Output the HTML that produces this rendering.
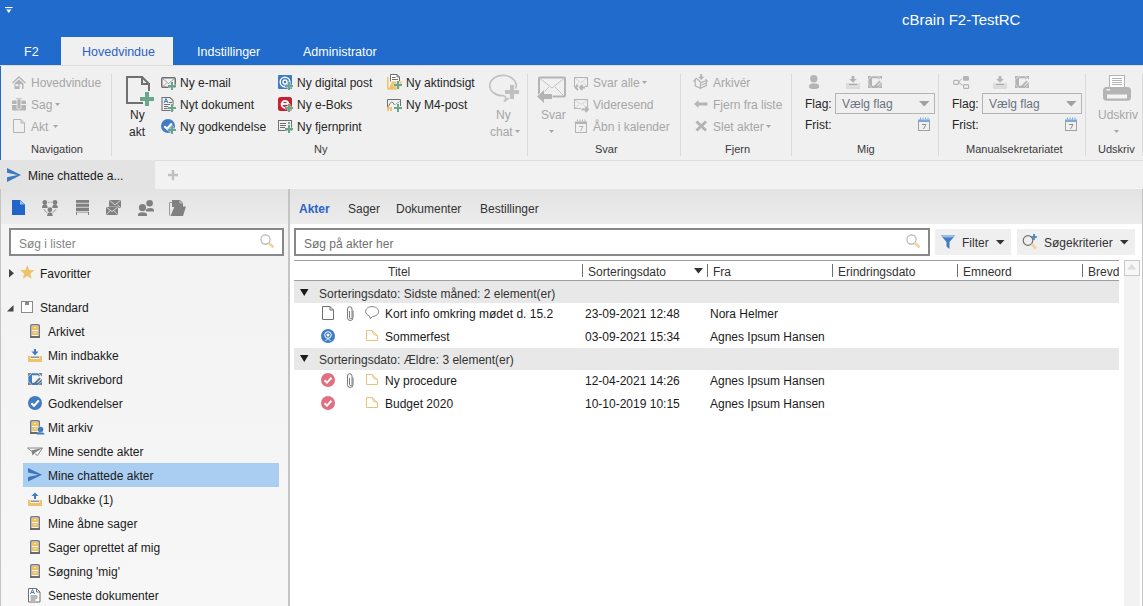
<!DOCTYPE html>
<html><head><meta charset="utf-8">
<style>
*{margin:0;padding:0;box-sizing:border-box}
html,body{width:1143px;height:606px;overflow:hidden;background:#f0f0f0;font-family:"Liberation Sans",sans-serif;font-size:12px;color:#262626}
.a{position:absolute}
.t{position:absolute;white-space:nowrap;line-height:14px}
svg{position:absolute;overflow:visible}
.tab{color:#fff;font-size:12.5px}
.gray{color:#a6a6a6}
.sep{position:absolute;width:1px;background:#dadada}
.lbl{color:#3a3a3a}
</style></head><body>


<!-- ============ TITLE BAR ============ -->
<div class="a" style="left:0;top:0;width:1143px;height:65px;background:#206bcb"></div>
<svg style="left:5px;top:7px" width="10" height="8"><rect x="0" y="0" width="7.6" height="1.1" fill="#fff"/><path d="M1.2 2.6 H6.4 L3.8 5.9 Z" fill="#fff"/></svg>
<div class="t" style="left:902px;top:11px;color:#fff;font-size:15px;line-height:18px">cBrain F2-TestRC</div>
<div class="a" style="left:61px;top:37px;width:112px;height:29px;background:#f0f0f0"></div>
<div class="t tab" style="left:24px;top:45px">F2</div>
<div class="t tab" style="left:82px;top:45px;color:#2c62c4">Hovedvindue</div>
<div class="t tab" style="left:197px;top:45px">Indstillinger</div>
<div class="t tab" style="left:303px;top:45px">Administrator</div>

<!-- ============ RIBBON ============ -->
<div class="a" style="left:0;top:65px;width:1143px;height:1px;background:#dcdcdc"></div>
<div class="a" style="left:0;top:66px;width:1px;height:95px;background:#206bcb"></div>


<!-- Navigation -->
<svg style="left:12px;top:76px" width="14" height="13"><path d="M0.6 7 L7 0.9 L13.4 7" fill="none" stroke="#b4b4b4" stroke-width="1.4"/><path d="M2.5 7.5 L7 3.4 L11.5 7.5 V13 H2.5 Z" fill="#b4b4b4" stroke="#f0f0f0" stroke-width="0.8" paint-order="stroke"/><rect x="3.5" y="8.2" width="3" height="2" fill="#f0f0f0"/><rect x="7.6" y="8.2" width="2.4" height="4.8" fill="#f0f0f0"/></svg>
<svg style="left:12px;top:98px" width="14" height="13"><rect x="0" y="2.5" width="14" height="10" rx="1" fill="#b4b4b4"/><rect x="0" y="6" width="14" height="1" fill="#f0f0f0"/><rect x="4.5" y="0" width="5" height="1.2" fill="#b4b4b4"/><rect x="5" y="1" width="4" height="10" rx="1" fill="#b4b4b4" stroke="#f0f0f0" stroke-width="0.8"/></svg>
<svg style="left:13px;top:119px" width="12" height="14"><path d="M0.5 0.5 H8 L11.5 4 V13.5 H0.5 Z" fill="none" stroke="#b4b4b4"/><path d="M8 0.5 V4 H11.5" fill="none" stroke="#b4b4b4"/></svg>
<div class="t gray" style="left:31px;top:76px">Hovedvindue</div>
<div class="t gray" style="left:31px;top:98px">Sag</div>
<svg style="left:55px;top:103px" width="6" height="4"><path d="M0 0H5L2.5 3Z" fill="#a6a6a6"/></svg>
<div class="t gray" style="left:31px;top:120px">Akt</div>
<svg style="left:53px;top:125px" width="6" height="4"><path d="M0 0H5L2.5 3Z" fill="#a6a6a6"/></svg>
<div class="t lbl" style="left:31px;top:142px;font-size:11px">Navigation</div>
<div class="sep" style="left:111px;top:74px;height:82px"></div>

<!-- Ny -->
<svg style="left:125px;top:75px" width="30" height="32"><path d="M1 2 H17 L24 9 V16" fill="none" stroke="#707070" stroke-width="2"/><path d="M2 1 V28 H18" fill="none" stroke="#707070" stroke-width="2"/><path d="M17 1 V9 H25" fill="none" stroke="#707070" stroke-width="2"/><path d="M20 17h4v5h5v4h-5v5h-4v-5h-5v-4h5z" fill="#6aa68c" stroke="#f0f0f0" stroke-width="1" paint-order="stroke"/></svg>
<div class="t" style="left:130px;top:108px">Ny</div>
<div class="t" style="left:129px;top:125px">akt</div>

<svg style="left:161px;top:77px" width="16" height="14"><rect x="0.75" y="0.75" width="13.5" height="9.5" rx="1" fill="none" stroke="#707070" stroke-width="1.5"/><path d="M1.5 1.5 L7.5 6.5 L13.5 1.5 M1.5 10 L5.5 6 M13.5 10 L9.5 6" fill="none" stroke="#8a8a8a" stroke-width="0.8"/><g transform="translate(7,5)"><path d="M3 0h2v3h3v2h-3v3h-2v-3h-3v-2h3z" fill="#6aa68c" stroke="#f0f0f0" stroke-width="0.8" paint-order="stroke"/></g></svg>
<svg style="left:161px;top:97px" width="16" height="16"><path d="M1 0.5 H9 L12 3.5 V13.5 H1 Z" fill="none" stroke="#707070" stroke-width="1.1"/><path d="M3 6 L5 1.5 L7 6 M3.8 4.5 H6.2" fill="none" stroke="#3f7cc4" stroke-width="1"/><path d="M8 5.5h3M3 7.5h6M3 9.5h4M3 11.5h4" stroke="#707070" stroke-width="1"/><g transform="translate(7,7)"><path d="M3 0h2v3h3v2h-3v3h-2v-3h-3v-2h3z" fill="#6aa68c" stroke="#f0f0f0" stroke-width="0.8" paint-order="stroke"/></g></svg>
<svg style="left:161px;top:119px" width="16" height="16"><g><circle cx="7" cy="7" r="7" fill="#3f7cc4"/><path d="M3.3 7.2 L6 9.8 L10.8 4.6" fill="none" stroke="#fff" stroke-width="2.2"/></g><g transform="translate(7,7)"><path d="M3 0h2v3h3v2h-3v3h-2v-3h-3v-2h3z" fill="#6aa68c" stroke="#f0f0f0" stroke-width="0.8" paint-order="stroke"/></g></svg>
<div class="t" style="left:180px;top:76px">Ny e-mail</div>
<div class="t" style="left:180px;top:98px">Nyt dokument</div>
<div class="t" style="left:180px;top:120px">Ny godkendelse</div>

<svg style="left:278px;top:75px" width="16" height="16"><rect x="0" y="0" width="14" height="14" rx="1" fill="#3f7cc4"/><circle cx="7" cy="7" r="4.8" fill="none" stroke="#fff" stroke-width="1.4"/><circle cx="7" cy="7" r="2" fill="none" stroke="#fff" stroke-width="1.4"/><g transform="translate(7,7)"><path d="M3 0h2v3h3v2h-3v3h-2v-3h-3v-2h3z" fill="#6aa68c" stroke="#f0f0f0" stroke-width="0.8" paint-order="stroke"/></g></svg>
<svg style="left:278px;top:97px" width="16" height="16"><rect x="0" y="0" width="14" height="14" rx="2.5" fill="#c8202f"/><path d="M3.5 7 H10.5 A3.5 3.5 0 1 0 9.8 9.5" fill="none" stroke="#fff" stroke-width="1.8"/><g transform="translate(7,7)"><path d="M3 0h2v3h3v2h-3v3h-2v-3h-3v-2h3z" fill="#6aa68c" stroke="#f0f0f0" stroke-width="0.8" paint-order="stroke"/></g></svg>
<svg style="left:278px;top:120px" width="16" height="14"><rect x="0.5" y="0.5" width="13" height="10" fill="none" stroke="#707070" stroke-width="1"/><path d="M2 3.5h6M2 5.5h6M2 7.5h5" stroke="#707070" stroke-width="1"/><rect x="10" y="2" width="2" height="2" fill="#6aa68c"/><g transform="translate(7,5)"><path d="M3 0h2v3h3v2h-3v3h-2v-3h-3v-2h3z" fill="#6aa68c" stroke="#f0f0f0" stroke-width="0.8" paint-order="stroke"/></g></svg>
<div class="t" style="left:297px;top:76px">Ny digital post</div>
<div class="t" style="left:297px;top:98px">Ny e-Boks</div>
<div class="t" style="left:297px;top:120px">Ny fjernprint</div>

<svg style="left:387px;top:74px" width="16" height="16"><path d="M0.75 3 V14.75 H9" stroke="#eec36a" stroke-width="1.5" fill="none"/><path d="M3.5 7.5 V0.5 H10 L12.5 3 V7.5" fill="#fff" stroke="#707070"/><path d="M10 0.5 V3 H12.5" fill="none" stroke="#707070"/><path d="M5 3.5 H8.5 M5 5.5 H11" stroke="#707070"/><path d="M1.5 15.5 L5 7.5 H15 L12 15.5 Z" fill="#eec36a"/><g transform="translate(7,7)"><path d="M3 0h2v3h3v2h-3v3h-2v-3h-3v-2h3z" fill="#6aa68c" stroke="#f0f0f0" stroke-width="0.8" paint-order="stroke"/></g></svg>
<svg style="left:387px;top:99px" width="16" height="14"><path d="M0.5 8 V0.5 H13.5 V7" fill="none" stroke="#707070"/><path d="M1.5 7.5 Q4.5 -0.5 7.5 6" fill="none" stroke="#707070" stroke-width="0.9"/><path d="M8.5 5.5 L12.5 2.5" stroke="#909090" stroke-width="0.9"/><rect x="0" y="8" width="5" height="4" fill="#eec36a"/><rect x="2" y="9.5" width="1.2" height="2.5" fill="#f0f0f0"/><g transform="translate(7,5)"><path d="M3 0h2v3h3v2h-3v3h-2v-3h-3v-2h3z" fill="#6aa68c" stroke="#f0f0f0" stroke-width="0.8" paint-order="stroke"/></g></svg>
<div class="t" style="left:406px;top:76px">Ny aktindsigt</div>
<div class="t" style="left:406px;top:98px">Ny M4-post</div>

<svg style="left:488px;top:75px" width="32" height="27"><path d="M27.6 13.6 A13.2 10.2 0 1 0 15.6 20.8 Q19.2 21.8 16.8 26" fill="none" stroke="#c0c0c0" stroke-width="1.6"/><path d="M15.8 26.4 L20.8 23" fill="none" stroke="#c0c0c0" stroke-width="1.8"/><path d="M22 10h4v5h5v4h-5v5h-4v-5h-5v-4h5z" fill="#c0c0c0" stroke="#f0f0f0" stroke-width="1" paint-order="stroke"/></svg>
<div class="t gray" style="left:496px;top:108px">Ny</div>
<div class="t gray" style="left:490px;top:125px">chat</div>
<svg style="left:515px;top:130px" width="6" height="4"><path d="M0 0H5L2.5 3Z" fill="#a6a6a6"/></svg>
<div class="t lbl" style="left:314px;top:142px;font-size:11px">Ny</div>
<div class="sep" style="left:527px;top:74px;height:82px"></div>

<!-- Svar -->
<svg style="left:537px;top:76px" width="32" height="28"><rect x="2" y="1.5" width="26" height="19" rx="1" fill="none" stroke="#b4b4b4" stroke-width="2"/><path d="M3 2.5 L15 12 L27 2.5 M3 20 L12 11 M27 20 L18 11" fill="none" stroke="#c4c4c4" stroke-width="1"/><path d="M0 20.5 L7 14 V18 H15 V23 H7 V27 Z" fill="#b4b4b4" stroke="#f0f0f0" stroke-width="1.2" paint-order="stroke"/></svg>
<div class="t gray" style="left:541px;top:108px">Svar</div>
<svg style="left:549px;top:130px" width="6" height="4"><path d="M0 0H5L2.5 3Z" fill="#a6a6a6"/></svg>
<svg style="left:574px;top:77px" width="16" height="14"><rect x="0.5" y="0.5" width="13" height="9" fill="none" stroke="#b4b4b4"/><path d="M1 1 L7 5.5 L13 1 M1 9 L5 5.5 M13 9 L9 5.5" fill="none" stroke="#c8c8c8" stroke-width="0.7"/><path d="M1 10.5 H11" stroke="#f0f0f0" stroke-width="4"/><path d="M4 8 L1.5 10.5 L4 13 M8.5 8 L6 10.5 L8.5 13 M6 10.5 H11" fill="none" stroke="#b4b4b4" stroke-width="1.8"/></svg>
<svg style="left:574px;top:99px" width="16" height="14"><rect x="0.5" y="0.5" width="13" height="9" fill="none" stroke="#b4b4b4"/><path d="M1 1 L7 5.5 L13 1 M1 9 L5 5.5 M13 9 L9 5.5" fill="none" stroke="#c8c8c8" stroke-width="0.7"/><path d="M7 10.5 H15" stroke="#f0f0f0" stroke-width="4"/><path d="M11.5 8 L14 10.5 L11.5 13 M7.5 10.5 H13.5" fill="none" stroke="#b4b4b4" stroke-width="1.8"/></svg>
<svg style="left:575px;top:119px" width="12" height="14"><g><rect x="0.5" y="3.5" width="11" height="10" fill="none" stroke="#b4b4b4"/><rect x="0" y="2.5" width="12" height="2.5" fill="#b4b4b4"/><path d="M2.5 0.5v2M5 0.5v2M7.5 0.5v2M10 0.5v2" stroke="#b4b4b4" stroke-width="1"/><path d="M4 7.5 H8 L5.5 12" fill="none" stroke="#b4b4b4" stroke-width="1"/></g></svg>
<div class="t gray" style="left:593px;top:76px">Svar alle</div>
<svg style="left:642px;top:81px" width="6" height="4"><path d="M0 0H5L2.5 3Z" fill="#a6a6a6"/></svg>
<div class="t gray" style="left:593px;top:98px">Videresend</div>
<div class="t gray" style="left:593px;top:120px">Åbn i kalender</div>
<div class="t lbl" style="left:595px;top:142px;font-size:11px">Svar</div>
<div class="sep" style="left:680px;top:74px;height:82px"></div>

<!-- Fjern -->
<svg style="left:693px;top:74px" width="16" height="16"><rect x="7.2" y="0" width="2" height="3.5" fill="#b4b4b4"/><path d="M5 2.8 H11.4 L8.2 6 Z" fill="#b4b4b4"/><path d="M0.3 7.6 L3.2 4.3 L7.5 7.8 M2.2 6 V11.8 L7.5 14.3 V7.8 M7.5 14.3 L13.3 11.5 V7.2 M7.5 8.6 L13.8 6.5 M12.6 5 L14.6 7.6 M8.6 11 L13 9.2" fill="none" stroke="#b4b4b4" stroke-width="1.2"/></svg>
<svg style="left:694px;top:100px" width="14" height="9"><path d="M0 4 L4.5 0 V2.5 H13.5 V5.5 H4.5 V8 Z" fill="#b4b4b4"/></svg>
<svg style="left:695px;top:120px" width="13" height="12"><path d="M1.5 1.5 L11 10.5 M11 1.5 L1.5 10.5" stroke="#b4b4b4" stroke-width="3"/></svg>
<div class="t gray" style="left:713px;top:76px">Arkivér</div>
<div class="t gray" style="left:713px;top:98px">Fjern fra liste</div>
<div class="t gray" style="left:713px;top:120px">Slet akter</div>
<svg style="left:766px;top:125px" width="6" height="4"><path d="M0 0H5L2.5 3Z" fill="#a6a6a6"/></svg>
<div class="t lbl" style="left:725px;top:142px;font-size:11px">Fjern</div>
<div class="sep" style="left:791px;top:74px;height:82px"></div>

<!-- Mig -->
<svg style="left:809px;top:75px" width="11" height="14"><circle cx="4.8" cy="3.8" r="3.7" fill="#b4b4b4"/><path d="M0 12 C0 9 2 8.6 5 8.6 C8 8.6 10.2 9 10.2 12 C10.2 13.6 8 14 5 14 C2 14 0 13.6 0 12 Z" fill="#b4b4b4"/></svg>
<svg style="left:846px;top:76px" width="14" height="13"><g><rect x="5.6" y="0" width="2.8" height="4" fill="#b4b4b4"/><path d="M3.3 3 H10.7 L7 6.8 Z" fill="#b4b4b4"/><rect x="0" y="7" width="14" height="6" fill="#dcdcdc"/><rect x="3" y="8" width="8" height="1" fill="#a8a8a8"/></g></svg>
<svg style="left:868px;top:76px" width="14" height="13"><g><path d="M0 0h3.5L0 3.5zM14 0h-3.5L14 3.5zM0 12h3.5L0 8.5zM14 12h-3.5L14 8.5z" fill="#b4b4b4"/><path d="M4 0.3 H10 L12 2.3 L10.5 3.8 V2.3 H4 V9.7 H10 L13.8 6 V8.3 L10 12 H4 L0.3 8.3 V3.8 Z" fill="#b4b4b4"/><path d="M6.5 9.5 L11.5 4.5 L12.8 5.8 L7.8 10.8 L6 11 Z" fill="#b4b4b4"/></g></svg>
<div class="t" style="left:805px;top:97px">Flag:</div>
<div class="a" style="left:835px;top:93px;width:100px;height:21px;border:1px solid #b4b4b4"></div>
<div class="t" style="left:842px;top:97px;color:#6a7280">Vælg flag</div>
<svg style="left:919px;top:101px" width="11" height="6"><path d="M0 0H10.5L5.25 5.5Z" fill="#a0a0a0"/></svg>
<div class="t" style="left:805px;top:118px">Frist:</div>
<svg style="left:918px;top:117px" width="12" height="14"><g><rect x="0.5" y="3.5" width="11" height="10" fill="none" stroke="#a0a0a0"/><rect x="0" y="2.5" width="12" height="2.5" fill="#7fa7d8"/><path d="M2.5 0.5v2M5 0.5v2M7.5 0.5v2M10 0.5v2" stroke="#7fa7d8" stroke-width="1"/><path d="M4 7.5 H8 L5.5 12" fill="none" stroke="#909090" stroke-width="1"/></g></svg>
<div class="t lbl" style="left:857px;top:142px;font-size:11px">Mig</div>
<div class="sep" style="left:938px;top:74px;height:82px"></div>

<!-- Manualsekretariatet -->
<svg style="left:953px;top:76px" width="17" height="13"><rect x="0.6" y="4.4" width="5" height="3.9" rx="1" fill="none" stroke="#b4b4b4" stroke-width="1.2"/><rect x="10" y="0" width="6" height="4.7" rx="1.2" fill="#b4b4b4"/><rect x="10.6" y="8.6" width="5" height="3.8" rx="1" fill="none" stroke="#b4b4b4" stroke-width="1.2"/><path d="M5.6 6.3 L8.6 2.6 M5.6 6.3 L10.4 9.8" fill="none" stroke="#b4b4b4" stroke-width="1"/></svg>
<svg style="left:993px;top:76px" width="14" height="13"><g><rect x="5.6" y="0" width="2.8" height="4" fill="#b4b4b4"/><path d="M3.3 3 H10.7 L7 6.8 Z" fill="#b4b4b4"/><rect x="0" y="7" width="14" height="6" fill="#dcdcdc"/><rect x="3" y="8" width="8" height="1" fill="#a8a8a8"/></g></svg>
<svg style="left:1015px;top:76px" width="14" height="13"><g><path d="M0 0h3.5L0 3.5zM14 0h-3.5L14 3.5zM0 12h3.5L0 8.5zM14 12h-3.5L14 8.5z" fill="#b4b4b4"/><path d="M4 0.3 H10 L12 2.3 L10.5 3.8 V2.3 H4 V9.7 H10 L13.8 6 V8.3 L10 12 H4 L0.3 8.3 V3.8 Z" fill="#b4b4b4"/><path d="M6.5 9.5 L11.5 4.5 L12.8 5.8 L7.8 10.8 L6 11 Z" fill="#b4b4b4"/></g></svg>
<div class="t" style="left:952px;top:97px">Flag:</div>
<div class="a" style="left:982px;top:93px;width:100px;height:21px;border:1px solid #b4b4b4"></div>
<div class="t" style="left:989px;top:97px;color:#6a7280">Vælg flag</div>
<svg style="left:1066px;top:101px" width="11" height="6"><path d="M0 0H10.5L5.25 5.5Z" fill="#a0a0a0"/></svg>
<div class="t" style="left:952px;top:118px">Frist:</div>
<svg style="left:1065px;top:117px" width="12" height="14"><g><rect x="0.5" y="3.5" width="11" height="10" fill="none" stroke="#a0a0a0"/><rect x="0" y="2.5" width="12" height="2.5" fill="#7fa7d8"/><path d="M2.5 0.5v2M5 0.5v2M7.5 0.5v2M10 0.5v2" stroke="#7fa7d8" stroke-width="1"/><path d="M4 7.5 H8 L5.5 12" fill="none" stroke="#909090" stroke-width="1"/></g></svg>
<div class="t lbl" style="left:966px;top:142px;font-size:11px">Manualsekretariatet</div>
<div class="sep" style="left:1085px;top:74px;height:82px"></div>

<!-- Udskriv -->
<svg style="left:1103px;top:75px" width="28" height="26"><rect x="6.5" y="0.5" width="15" height="12" fill="#fff" stroke="#b4b4b4"/><path d="M9 3.5h10M9 5.5h10M9 7.5h10M9 9.5h10" stroke="#b4b4b4" stroke-width="1"/><rect x="0" y="12" width="28" height="13.7" rx="3.5" fill="#b4b4b4"/><rect x="4" y="19.5" width="20" height="4" fill="#f4f4f4"/><rect x="3.5" y="14" width="3.5" height="1.5" fill="#f4f4f4"/></svg>
<div class="t gray" style="left:1098px;top:108px">Udskriv</div>
<svg style="left:1114px;top:130px" width="6" height="4"><path d="M0 0H5L2.5 3Z" fill="#a6a6a6"/></svg>
<div class="t lbl" style="left:1098px;top:142px;font-size:11px">Udskriv</div>
<div class="sep" style="left:1142px;top:74px;height:82px"></div>

<!-- ============ DOC TAB STRIP ============ -->
<div class="a" style="left:0;top:160px;width:1143px;height:1px;background:#dedede"></div>
<div class="a" style="left:0;top:161px;width:1143px;height:28px;background:#f2f2f2"></div>
<div class="a" style="left:0;top:160px;width:155px;height:29px;background:#e3e3e3"></div>
<svg style="left:7px;top:168px" width="15" height="14"><path d="M0 0 L14 7 L0 14 L0 9.2 L10.5 7 L0 4.8 Z" fill="#3d78c0"/></svg>
<div class="t" style="left:28px;top:169px;color:#1a1a1a">Mine chattede a...</div>
<svg style="left:168px;top:170px" width="10" height="10"><path d="M3.8 0h2.4v3.8h3.8v2.4h-3.8v3.8h-2.4v-3.8h-3.8v-2.4h3.8z" fill="#c0c0c0"/></svg>

<!-- ============ LEFT PANEL ============ -->
<div class="a" style="left:0;top:189px;width:289px;height:417px;background:linear-gradient(#f3f3f3 0px,#f3f3f3 120px,#f7f7f7 417px);border-left:1px solid #c4c4c4"></div>
<div class="a" style="left:1px;top:189px;width:287px;height:35px;background:linear-gradient(#e3e3e3,#ececec)"></div>
<svg style="left:12px;top:200px" width="13" height="15"><path d="M0 0 H8 L13 4.5 V15 H0 Z" fill="#1f66c8"/><path d="M8 0.5 V4.5 H12.5 Z" fill="#9fc0ea"/></svg>
<svg style="left:42px;top:200px" width="17" height="16"><circle cx="2.8" cy="2.5" r="2.4" fill="#808080"/><path d="M0 8 Q0 4.6 2.8 4.6 Q5.6 4.6 5.6 8 Z" fill="#808080"/><circle cx="13" cy="2.5" r="2.4" fill="#808080"/><path d="M10.2 8 Q10.2 4.6 13 4.6 Q15.8 4.6 15.8 8 Z" fill="#808080"/><circle cx="7.9" cy="9.7" r="2.4" fill="#808080"/><path d="M5.1 16 Q5.1 12.2 7.9 12.2 Q10.7 12.2 10.7 16 Z" fill="#808080"/><path d="M6 2.3 H10" stroke="#909090" stroke-width="0.8" stroke-dasharray="1 0.6"/><path d="M1.8 9.2 L5 12.8 M14 9.2 L10.8 12.8" stroke="#808080" stroke-width="0.9"/></svg>
<svg style="left:76px;top:200px" width="13" height="15"><rect x="0" y="0" width="13" height="12.5" fill="#808080"/><path d="M0 3.3h13M0 7.3h13M0 11.6h13" stroke="#e2e2e2" stroke-width="0.9"/><rect x="0" y="12" width="1" height="3" fill="#808080"/><rect x="12" y="12" width="1" height="3" fill="#808080"/></svg>
<svg style="left:106px;top:200px" width="16" height="15"><rect x="3" y="0" width="12" height="8" fill="#808080"/><path d="M3.3 0.3 L9 4.8 L14.7 0.3 M14.7 7.7 L11.5 5" fill="none" stroke="#e8e8e8" stroke-width="0.8"/><rect x="0" y="7" width="12" height="8" rx="0.6" fill="#808080" stroke="#e8e8e8" stroke-width="0.7" paint-order="stroke"/><path d="M0.4 7.4 L6 11.6 L11.6 7.4 M0.4 14.6 L4.3 10.5 M11.6 14.6 L7.7 10.5" fill="none" stroke="#e8e8e8" stroke-width="0.8"/></svg>
<svg style="left:138px;top:200px" width="17" height="17"><circle cx="11.6" cy="3.3" r="3.3" fill="#808080"/><path d="M8 11.5 V10 C8 7.3 16 7.3 16 10 V11.5 Z" fill="#808080"/><circle cx="4.5" cy="7.7" r="3.6" fill="#808080" stroke="#e8e8e8" stroke-width="0.8" paint-order="stroke"/><path d="M0 16 V14.5 C0 11.5 9 11.5 9 14.5 V16 Z" fill="#808080" stroke="#e8e8e8" stroke-width="0.8" paint-order="stroke"/></svg>
<svg style="left:169px;top:200px" width="17" height="16"><path d="M0.5 15.5 V2.5 H3" fill="none" stroke="#9a9a9a" stroke-width="1"/><path d="M3 0 H11 L14 3 V7 H3 Z" fill="#808080"/><path d="M11 0.5 V3 H13.5" fill="none" stroke="#e8e8e8" stroke-width="0.7"/><path d="M5.5 6.5 H17 L14 16 H1.5 Z" fill="#808080"/></svg>

<div class="a" style="left:9px;top:228px;width:275px;height:28px;border:2px solid #888;background:#fff"></div>
<div class="t" style="left:19px;top:237px;color:#858585">Søg i lister</div>
<svg style="left:260px;top:234px" width="16" height="15"><circle cx="5.5" cy="5.5" r="4.6" fill="none" stroke="#b0b0b0" stroke-width="1.1"/><path d="M9 9 L13.5 13.5" stroke="#efd39a" stroke-width="2.5"/></svg>

<svg style="left:9px;top:269px" width="6" height="9"><path d="M0 0 L5 4.3 L0 8.6 Z" fill="#444"/></svg>
<svg style="left:20px;top:265px" width="15" height="15"><path d="M7.3 0 L9.2 4.9 L14.5 5.2 L10.4 8.6 L11.7 13.8 L7.3 11 L2.8 13.8 L4.2 8.6 L0 5.2 L5.3 4.9 Z" fill="#eec36a"/></svg>
<div class="t" style="left:40px;top:267px;color:#1a1a1a">Favoritter</div>

<svg style="left:7px;top:305px" width="7" height="7"><path d="M6.5 0 V6.5 H0 Z" fill="#444"/></svg>
<svg style="left:21px;top:301px" width="12" height="12"><rect x="0.5" y="0.5" width="11" height="11" fill="#fff" stroke="#8a8a8a"/><rect x="4" y="1" width="4" height="3" fill="#8a8a8a"/></svg>
<div class="t" style="left:40px;top:301px;color:#1a1a1a">Standard</div>

<div class="a" style="left:23px;top:463px;width:256px;height:24px;background:#a9cef1"></div>
<svg style="left:30px;top:324px" width="10" height="14"><g><rect x="0.75" y="0.75" width="8.5" height="12.5" rx="1" fill="#f4f4f4" stroke="#7a7a7a" stroke-width="1.5"/><rect x="2" y="2" width="6" height="4" fill="#eec36a"/><rect x="2" y="7" width="6" height="4" fill="#eec36a"/><rect x="0" y="12" width="10" height="2" fill="#6a6a6a"/><rect x="4" y="3" width="2" height="1" fill="#f8e0b0"/><rect x="4" y="8" width="2" height="1" fill="#f8e0b0"/></g></svg>
<svg style="left:28px;top:349px" width="14" height="13"><path d="M3.5 2.6 H10.5 L7 6.4 Z" fill="#3f7cc4"/><rect x="6" y="0" width="2" height="3" fill="#3f7cc4"/><path d="M0 7 H2.5 V10 H11.5 V7 H14 V13 H0 Z" fill="#eec36a"/><rect x="3" y="7.6" width="8" height="1.1" fill="#707070"/></svg>
<svg style="left:28px;top:373px" width="14" height="12"><g><path d="M0 0h3.5L0 3.5zM14 0h-3.5L14 3.5zM0 12h3.5L0 8.5zM14 12h-3.5L14 8.5z" fill="#808080"/><path d="M4 0.3 H10 L12 2.3 L10.5 3.8 V2.3 H4 V9.7 H10 L13.8 6 V8.3 L10 12 H4 L0.3 8.3 V3.8 Z" fill="#3f7cc4"/><path d="M6.5 9.5 L11.5 4.5 L12.8 5.8 L7.8 10.8 L6 11 Z" fill="#707070"/></g></svg>
<svg style="left:28px;top:396px" width="14" height="14"><g><circle cx="7" cy="7" r="7" fill="#3f7cc4"/><path d="M3.3 7.2 L6 9.8 L10.8 4.6" fill="none" stroke="#fff" stroke-width="2.2"/></g></svg>
<svg style="left:30px;top:420px" width="15" height="15"><g><rect x="0.75" y="0.75" width="8.5" height="12.5" rx="1" fill="#f4f4f4" stroke="#7a7a7a" stroke-width="1.5"/><rect x="2" y="2" width="6" height="4" fill="#eec36a"/><rect x="2" y="7" width="6" height="4" fill="#eec36a"/><rect x="0" y="12" width="10" height="2" fill="#6a6a6a"/><rect x="4" y="3" width="2" height="1" fill="#f8e0b0"/><rect x="4" y="8" width="2" height="1" fill="#f8e0b0"/></g><circle cx="10.6" cy="9.4" r="2.7" fill="#3f7cc4" stroke="#f3f3f3" stroke-width="0.8" paint-order="stroke"/><path d="M6.6 14.6 C6.6 11.6 14.6 11.6 14.6 14.6 Z" fill="#3f7cc4" stroke="#f3f3f3" stroke-width="0.6" paint-order="stroke"/></svg>
<svg style="left:27px;top:447px" width="16" height="10"><path d="M0.5 1 H15.5 L10.5 8.5 L8 6.8 M0.5 1 L4.5 4.2" fill="none" stroke="#8a8a8a" stroke-width="1"/><path d="M4.2 3.6 L15.5 1 L8.2 5.6 L5.6 8.6 Z" fill="#808080"/></svg>
<svg style="left:28px;top:468px" width="15" height="14"><path d="M0 0 L14 6.8 L0 13.6 L0 9 L10.5 6.8 L0 4.6 Z" fill="#3d75b8"/></svg>
<svg style="left:28px;top:492px" width="14" height="14"><path d="M3.5 4 L7 0.5 L10.5 4 Z" fill="#3f7cc4"/><rect x="6" y="3.5" width="2" height="3.5" fill="#3f7cc4"/><path d="M0 8 H2.5 V11 H11.5 V8 H14 V14 H0 Z" fill="#eec36a"/><rect x="3" y="8.6" width="8" height="1.1" fill="#707070"/></svg>
<svg style="left:30px;top:516px" width="10" height="14"><g><rect x="0.75" y="0.75" width="8.5" height="12.5" rx="1" fill="#f4f4f4" stroke="#7a7a7a" stroke-width="1.5"/><rect x="2" y="2" width="6" height="4" fill="#eec36a"/><rect x="2" y="7" width="6" height="4" fill="#eec36a"/><rect x="0" y="12" width="10" height="2" fill="#6a6a6a"/><rect x="4" y="3" width="2" height="1" fill="#f8e0b0"/><rect x="4" y="8" width="2" height="1" fill="#f8e0b0"/></g></svg>
<svg style="left:30px;top:540px" width="10" height="14"><g><rect x="0.75" y="0.75" width="8.5" height="12.5" rx="1" fill="#f4f4f4" stroke="#7a7a7a" stroke-width="1.5"/><rect x="2" y="2" width="6" height="4" fill="#eec36a"/><rect x="2" y="7" width="6" height="4" fill="#eec36a"/><rect x="0" y="12" width="10" height="2" fill="#6a6a6a"/><rect x="4" y="3" width="2" height="1" fill="#f8e0b0"/><rect x="4" y="8" width="2" height="1" fill="#f8e0b0"/></g></svg>
<svg style="left:30px;top:564px" width="10" height="14"><g><rect x="0.75" y="0.75" width="8.5" height="12.5" rx="1" fill="#f4f4f4" stroke="#7a7a7a" stroke-width="1.5"/><rect x="2" y="2" width="6" height="4" fill="#eec36a"/><rect x="2" y="7" width="6" height="4" fill="#eec36a"/><rect x="0" y="12" width="10" height="2" fill="#6a6a6a"/><rect x="4" y="3" width="2" height="1" fill="#f8e0b0"/><rect x="4" y="8" width="2" height="1" fill="#f8e0b0"/></g></svg>
<svg style="left:28px;top:588px" width="13" height="15"><path d="M0.5 0.5 H8.5 L12 4 V14 H0.5 Z" fill="#fff" stroke="#707070"/><path d="M8.5 0.5 V4 H12" fill="none" stroke="#707070"/><path d="M2.5 6 L4.5 1.5 L6.5 6 M3.2 4.5 H5.8" fill="none" stroke="#3f7cc4" stroke-width="1"/><path d="M2.5 8h7M2.5 10h7M2.5 12h5" stroke="#707070"/></svg>

<div class="t" style="left:48px;top:325px;color:#1a1a1a">Arkivet</div>
<div class="t" style="left:48px;top:349px;color:#1a1a1a">Min indbakke</div>
<div class="t" style="left:48px;top:373px;color:#1a1a1a">Mit skrivebord</div>
<div class="t" style="left:48px;top:397px;color:#1a1a1a">Godkendelser</div>
<div class="t" style="left:48px;top:421px;color:#1a1a1a">Mit arkiv</div>
<div class="t" style="left:48px;top:445px;color:#1a1a1a">Mine sendte akter</div>
<div class="t" style="left:48px;top:469px;color:#1a1a1a">Mine chattede akter</div>
<div class="t" style="left:48px;top:493px;color:#1a1a1a">Udbakke (1)</div>
<div class="t" style="left:48px;top:517px;color:#1a1a1a">Mine åbne sager</div>
<div class="t" style="left:48px;top:541px;color:#1a1a1a">Sager oprettet af mig</div>
<div class="t" style="left:48px;top:565px;color:#1a1a1a">Søgning 'mig'</div>
<div class="t" style="left:48px;top:589px;color:#1a1a1a">Seneste dokumenter</div>

<!-- ============ RIGHT PANEL ============ -->
<div class="a" style="left:288px;top:189px;width:2px;height:417px;background:#c4c4c4"></div>
<div class="a" style="left:290px;top:189px;width:853px;height:417px;background:#fff"></div>
<div class="a" style="left:290px;top:189px;width:853px;height:35px;background:linear-gradient(#e3e3e3,#ececec)"></div>
<div class="t" style="left:299px;top:202px;color:#2a64c6;font-weight:bold">Akter</div>
<div class="t" style="left:348px;top:202px;color:#333">Sager</div>
<div class="t" style="left:396px;top:202px;color:#333">Dokumenter</div>
<div class="t" style="left:480px;top:202px;color:#333">Bestillinger</div>

<div class="a" style="left:294px;top:228px;width:636px;height:28px;border:2px solid #888;background:#fff"></div>
<div class="t" style="left:304px;top:237px;color:#6f6f6f">Søg på akter her</div>
<svg style="left:906px;top:234px" width="16" height="15"><circle cx="5.5" cy="5.5" r="4.6" fill="none" stroke="#b0b0b0" stroke-width="1.1"/><path d="M9 9 L13.5 13.5" stroke="#efd39a" stroke-width="2.5"/></svg>

<div class="a" style="left:935px;top:229px;width:76px;height:26px;background:#efefef"></div>
<svg style="left:941px;top:235px" width="14" height="14"><path d="M0 0.5 H14 L8.5 7 V14 L5.5 11.5 V7 Z" fill="#3f7cc4"/><ellipse cx="7" cy="1.5" rx="6" ry="1" fill="#9dc0ea"/></svg>
<div class="t" style="left:962px;top:236px;color:#333">Filter</div>
<svg style="left:996px;top:240px" width="9" height="5"><path d="M0 0H8.5L4.25 4.5Z" fill="#333"/></svg>
<div class="a" style="left:1017px;top:229px;width:118px;height:26px;background:#efefef"></div>
<svg style="left:1022px;top:234px" width="17" height="16"><circle cx="6" cy="6.5" r="4.8" fill="none" stroke="#707070" stroke-width="1.2"/><path d="M9.5 10 L14 14.5" stroke="#efd39a" stroke-width="2.5"/><path d="M12 0v6M9 3h6" stroke="#3f7cc4" stroke-width="1.6"/></svg>
<div class="t" style="left:1044px;top:236px;color:#333">Søgekriterier</div>
<svg style="left:1120px;top:240px" width="9" height="5"><path d="M0 0H8.5L4.25 4.5Z" fill="#333"/></svg>

<!-- table -->
<div class="a" style="left:294px;top:260px;width:825px;height:1px;background:#a0a0a0"></div>
<div class="a" style="left:294px;top:280px;width:825px;height:1px;background:#a0a0a0"></div>
<div class="a" style="left:582px;top:264px;width:1px;height:13px;background:#707070"></div>
<div class="a" style="left:707px;top:264px;width:1px;height:13px;background:#707070"></div>
<div class="a" style="left:832px;top:264px;width:1px;height:13px;background:#707070"></div>
<div class="a" style="left:957px;top:264px;width:1px;height:13px;background:#707070"></div>
<div class="a" style="left:1082px;top:264px;width:1px;height:13px;background:#707070"></div>
<div class="t" style="left:388px;top:265px;color:#333">Titel</div>
<div class="t" style="left:588px;top:265px;color:#333">Sorteringsdato</div>
<svg style="left:694px;top:268px" width="10" height="6"><path d="M0 0H9L4.5 5.5Z" fill="#333"/></svg>
<div class="t" style="left:713px;top:265px;color:#333">Fra</div>
<div class="t" style="left:838px;top:265px;color:#333">Erindringsdato</div>
<div class="t" style="left:963px;top:265px;color:#333">Emneord</div>
<div class="a" style="left:1088px;top:260px;width:31px;height:20px;overflow:hidden"><div class="t" style="left:0;top:5px;color:#333">Brevdato</div></div>

<div class="a" style="left:294px;top:281px;width:825px;height:22px;background:#e8e8e8"></div>
<svg style="left:300px;top:289px" width="9" height="8"><path d="M0 0H8.5L4.25 7Z" fill="#1a1a1a"/></svg>
<div class="t" style="left:319px;top:287px;color:#333">Sorteringsdato: Sidste måned: 2 element(er)</div>

<svg style="left:322px;top:306px" width="12" height="14"><g><path d="M0.5 0.5 H8 L11.5 4 V13.5 H0.5 Z" fill="#fff" stroke="#707070"/><path d="M8 0.5 V4 H11.5" fill="none" stroke="#707070"/></g></svg>
<svg style="left:347px;top:306px" width="8" height="15"><g><path d="M6 4.5 V11.8 A2.75 2.75 0 0 1 0.5 11.8 V3 A2.25 2.25 0 0 1 5 3 V11.5 A1.25 1.25 0 0 1 2.5 11.5 V5" fill="none" stroke="#6a6a6a" stroke-width="0.9"/></g></svg>
<svg style="left:365px;top:306px" width="15" height="14"><path d="M7 0.6 C3.5 0.6 0.6 2.8 0.6 5.5 C0.6 7.5 2.3 9.2 4.5 10 L5.5 12.8 L7.5 10.4 C11 10.4 13.6 8.2 13.6 5.5 C13.6 2.8 10.6 0.6 7 0.6 Z" fill="none" stroke="#808080" stroke-width="1"/></svg>
<div class="t" style="left:385px;top:307px;color:#1a1a1a">Kort info omkring mødet d. 15.2</div>
<div class="t" style="left:585px;top:307px;color:#1a1a1a">23-09-2021 12:48</div>
<div class="t" style="left:710px;top:307px;color:#1a1a1a">Nora Helmer</div>

<svg style="left:321px;top:329px" width="14" height="14"><circle cx="7" cy="7" r="7" fill="#3f7cc4"/><circle cx="7" cy="6" r="3.3" fill="none" stroke="#fff" stroke-width="1"/><circle cx="7" cy="6" r="1.5" fill="#fff"/><path d="M4.5 12 L7 9.5 L9.5 12" fill="none" stroke="#fff" stroke-width="1"/></svg>
<svg style="left:366px;top:330px" width="12" height="11"><g><path d="M0.5 0.5 H6 L11.5 5.5 V10.5 H0.5 Z" fill="#fff" stroke="#e6c27a"/><path d="M6 0.5 L7.8 4.6 L11.5 5.5" fill="none" stroke="#e6c27a"/></g></svg>
<div class="t" style="left:385px;top:330px;color:#1a1a1a">Sommerfest</div>
<div class="t" style="left:585px;top:330px;color:#1a1a1a">03-09-2021 15:34</div>
<div class="t" style="left:710px;top:330px;color:#1a1a1a">Agnes Ipsum Hansen</div>

<div class="a" style="left:294px;top:348px;width:825px;height:22px;background:#e8e8e8"></div>
<svg style="left:300px;top:355px" width="9" height="8"><path d="M0 0H8.5L4.25 7Z" fill="#1a1a1a"/></svg>
<div class="t" style="left:319px;top:353px;color:#333">Sorteringsdato: Ældre: 3 element(er)</div>

<svg style="left:321px;top:373px" width="14" height="14"><circle cx="7" cy="7" r="7" fill="#e07080"/><path d="M3.5 7.2 L6 9.6 L10.5 4.8" fill="none" stroke="#fff" stroke-width="2"/></svg>
<svg style="left:347px;top:373px" width="8" height="15"><g><path d="M6 4.5 V11.8 A2.75 2.75 0 0 1 0.5 11.8 V3 A2.25 2.25 0 0 1 5 3 V11.5 A1.25 1.25 0 0 1 2.5 11.5 V5" fill="none" stroke="#6a6a6a" stroke-width="0.9"/></g></svg>
<svg style="left:366px;top:374px" width="12" height="11"><g><path d="M0.5 0.5 H6 L11.5 5.5 V10.5 H0.5 Z" fill="#fff" stroke="#e6c27a"/><path d="M6 0.5 L7.8 4.6 L11.5 5.5" fill="none" stroke="#e6c27a"/></g></svg>
<div class="t" style="left:385px;top:374px;color:#1a1a1a">Ny procedure</div>
<div class="t" style="left:585px;top:374px;color:#1a1a1a">12-04-2021 14:26</div>
<div class="t" style="left:710px;top:374px;color:#1a1a1a">Agnes Ipsum Hansen</div>

<svg style="left:321px;top:396px" width="14" height="14"><circle cx="7" cy="7" r="7" fill="#e07080"/><path d="M3.5 7.2 L6 9.6 L10.5 4.8" fill="none" stroke="#fff" stroke-width="2"/></svg>
<svg style="left:366px;top:397px" width="12" height="11"><g><path d="M0.5 0.5 H6 L11.5 5.5 V10.5 H0.5 Z" fill="#fff" stroke="#e6c27a"/><path d="M6 0.5 L7.8 4.6 L11.5 5.5" fill="none" stroke="#e6c27a"/></g></svg>
<div class="t" style="left:385px;top:397px;color:#1a1a1a">Budget 2020</div>
<div class="t" style="left:585px;top:397px;color:#1a1a1a">10-10-2019 10:15</div>
<div class="t" style="left:710px;top:397px;color:#1a1a1a">Agnes Ipsum Hansen</div>

<!-- scrollbar -->
<div class="a" style="left:1124px;top:260px;width:16px;height:346px;background:#f2f2f2"></div>
<div class="a" style="left:1124px;top:260px;width:16px;height:16px;border:1px solid #c8c8c8;background:#f7f7f7"></div>
<svg style="left:1127px;top:264px" width="10" height="6"><path d="M0 5.5H9.5L4.75 0Z" fill="#dedede"/></svg>
<div class="a" style="left:1142px;top:189px;width:1px;height:417px;background:#c4c4c4"></div>
</body></html>
